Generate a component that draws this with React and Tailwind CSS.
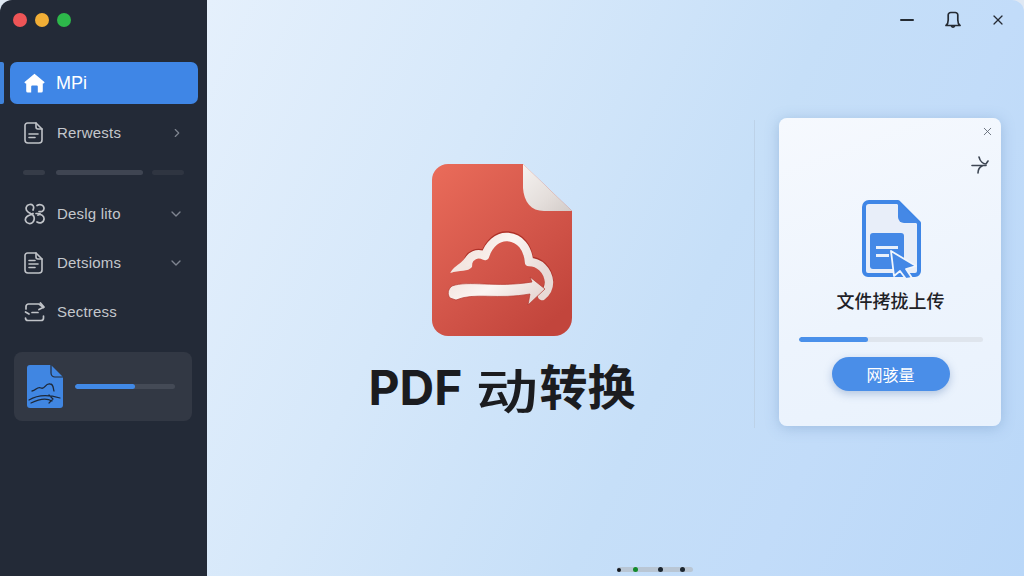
import React from "react";
import { ChevronDown, ChevronRight, X } from "lucide-react";

const sans = { fontFamily: '"Liberation Sans", "Noto Sans CJK SC", sans-serif' };

function HomeIcon() {
  return (
    <svg width="21" height="20" viewBox="0 0 21 20">
      <path d="M10.5 0.8 L20.4 9 Q21 10.4 19.2 10.4 L18.8 10.4 V18 a1.6 1.6 0 0 1 -1.6 1.6 H13.8 V13.5 a1 1 0 0 0 -1 -1 H8.2 a1 1 0 0 0 -1 1 V19.6 H3.8 a1.6 1.6 0 0 1 -1.6 -1.6 V10.4 L1.8 10.4 Q0 10.4 0.6 9 Z" fill="#fff" />
    </svg>
  );
}

function DocIcon({ lines }) {
  return (
    <svg width="19" height="22" viewBox="0 0 19 22" fill="none" stroke="#c0c3c8" strokeWidth="1.6" strokeLinecap="round" strokeLinejoin="round">
      <path d="M3.5 1 H12 L18 7 V18 a3 3 0 0 1 -3 3 H4 a3 3 0 0 1 -3 -3 V3.5 a2.5 2.5 0 0 1 2.5 -2.5 Z" />
      <path d="M12 1 V5 a2 2 0 0 0 2 2 H18" />
      {lines === 3 && <path d="M5 8.5 H11" />}
      <path d="M5 12 H14" />
      <path d="M5 15.5 H11" />
    </svg>
  );
}

function LinkIcon() {
  return (
    <svg width="21" height="22" viewBox="0 0 21 22" fill="none" stroke="#c0c3c8" strokeWidth="1.7" strokeLinecap="round">
      <path d="M9 7 C11 3 8 1 5.5 1.5 C2 2 1 6 3.5 8.5 C5.5 10.5 9 11 10 14 C11 18 8 21 5 20.5 C1.5 20 0 16 3 13.5 C5 12 7 12 9 10.5" />
      <path d="M13 2.5 C16 0.5 20 2 20 5.5 C20 8 17.5 9 15 8.5" />
      <path d="M14 12 C17 10.5 20.5 13 20 16.5 C19.5 19.5 16 21 13 19" />
      <path d="M12 10.5 L16 10.5" />
    </svg>
  );
}

function SyncIcon() {
  return (
    <svg width="21" height="20" viewBox="0 0 21 20" fill="none" stroke="#c0c3c8" strokeWidth="1.7" strokeLinecap="round" strokeLinejoin="round">
      <path d="M2 7 V4.5 a2.5 2.5 0 0 1 2.5 -2.5 H15 L19.5 5.5" />
      <path d="M16.5 1 L20 5 L15 7.5" />
      <path d="M1.5 16 a2.5 2.5 0 0 0 2.5 2.5 H17 a2.5 2.5 0 0 0 2.5 -2.5 V14" />
      <path d="M8 10.5 H14" />
      <path d="M1.5 10 L5 12" />
    </svg>
  );
}

function NavRow({ icon, label, chevron }) {
  return (
    <div className="h-[42px] mx-[10px] pl-[14px] pr-[13px] flex items-center text-[15px] tracking-[0.2px] text-[#c4c7cc]">
      <span className="w-[33px] flex items-center">{icon}</span>
      <span className="flex-1">{label}</span>
      {chevron === "right" && <ChevronRight size={14} color="#7f8590" strokeWidth={2} />}
      {chevron === "down" && <ChevronDown size={16} color="#7f8590" strokeWidth={2} />}
    </div>
  );
}

function MiniFile() {
  return (
    <svg width="36" height="43" viewBox="0 0 36 43" className="shrink-0">
      <path d="M3 0 H24 L36 12 V40 a3 3 0 0 1 -3 3 H3 a3 3 0 0 1 -3 -3 V3 a3 3 0 0 1 3 -3 Z" fill="#4086e2" />
      <path d="M24 0 V8 a4 4 0 0 0 4 4 H36" fill="none" stroke="#232a37" strokeWidth="1.2" />
      <path d="M5 26 C9 26 10 21 14 23 C18 25 18 18 23 19 C27 19 26 24 27 26" fill="none" stroke="#1d2838" strokeWidth="1.3" strokeLinecap="round" />
      <path d="M2 35 C10 30 20 29 33 33 M4 38 C12 34 20 33 25 36 M22 30 L26 34 L22 38" fill="none" stroke="#1d2838" strokeWidth="1.2" strokeLinecap="round" />
    </svg>
  );
}

function PdfLogo() {
  const cloud = "M36 98 C38 92 45 88 53 92 C57 80 66 72 76 73 C88 74 96 84 97 98 C107 98 116 106 117 118 C117 124 114 129 110 132";
  return (
    <svg width="140" height="172" viewBox="0 0 140 172" className="block">
      <defs>
        <linearGradient id="body" x1="0" y1="0" x2="0.75" y2="1">
          <stop offset="0" stopColor="#ea6c5a" />
          <stop offset="0.55" stopColor="#d4574b" />
          <stop offset="1" stopColor="#c2453c" />
        </linearGradient>
        <linearGradient id="fold" x1="0" y1="0" x2="1" y2="1">
          <stop offset="0" stopColor="#f5f2f0" />
          <stop offset="0.6" stopColor="#e4dedb" />
          <stop offset="1" stopColor="#d2cbc8" />
        </linearGradient>
        <linearGradient id="cl" x1="0" y1="0" x2="1" y2="0.4">
          <stop offset="0" stopColor="#f2e2dc" />
          <stop offset="0.5" stopColor="#fbf5f2" />
          <stop offset="1" stopColor="#e8dad6" />
        </linearGradient>
      </defs>
      <path d="M16 0 H91 L140 47 V154 a18 18 0 0 1 -18 18 H16 a16 16 0 0 1 -16 -16 V16 a16 16 0 0 1 16 -16 Z" fill="url(#body)" />
      <path d="M91 0 L140 47 H112 C99 47 92 38 91 24 Z" fill="url(#fold)" />
      <path d={cloud} fill="none" stroke="#ae3128" strokeWidth="9" strokeLinecap="round" strokeLinejoin="round" transform="translate(0 -1.2)" />
      <path d="M18 109 C24 100 28 101 33 94 L41 92 L40 103 C36 108 28 106 18 109 Z" fill="#f3e6e1" />
      <path d={cloud} fill="none" stroke="url(#cl)" strokeWidth="8.5" strokeLinecap="round" strokeLinejoin="round" />
      <path d="M20 122 C36 116 64 124 100 118 L98 113 L113 125 L96 141 L98 130 C66 136 42 128 24 136 L18 134 C15 130 16 125 20 122 Z" fill="url(#cl)" stroke="#b33a30" strokeWidth="0.7" />
    </svg>
  );
}

function UploadFile() {
  return (
    <svg width="60" height="80" viewBox="0 0 60 80" className="block">
      <path d="M7 2 H36 L57 23 V71 a4 4 0 0 1 -4 4 H6 a4 4 0 0 1 -4 -4 V7 a5 5 0 0 1 5 -5 Z" fill="#e8eef9" stroke="#3f86e6" strokeWidth="4" strokeLinejoin="round" />
      <path d="M36 2 L57 23 H42 a6 6 0 0 1 -6 -6 Z" fill="#4488e6" />
      <rect x="8" y="33" width="34" height="36" rx="3" fill="#4488e6" />
      <rect x="14" y="46" width="22" height="3" fill="#e9f0fb" />
      <rect x="14" y="54" width="13" height="3" fill="#e9f0fb" />
      <path d="M29 51 L54 66 L44 69 L50 78 L44 79 L38 71 L32 76 Z" fill="#4488e6" stroke="#f1f6fd" strokeWidth="1.8" strokeLinejoin="round" />
    </svg>
  );
}

function SplitIcon() {
  return (
    <svg width="18" height="18" viewBox="0 0 18 18" fill="none" stroke="#3d4653" strokeWidth="1.6" strokeLinecap="round">
      <path d="M1 9.5 H15" />
      <path d="M8 1 C9 5 12 8 15 8 L17 5" />
      <path d="M7 17 C7 13 9 11 11 10" />
    </svg>
  );
}

function BellIcon() {
  return (
    <svg width="16" height="18" viewBox="0 0 16 18" fill="none" stroke="#252b33" strokeWidth="1.7" strokeLinecap="round" strokeLinejoin="round">
      <path d="M1 14.5 C3 13 3.2 11 3.2 9 V4 a2.5 2.5 0 0 1 2.5 -2.5 H10.3 a2.5 2.5 0 0 1 2.5 2.5 V9 C12.8 11 13 13 15 14.5 Z" />
      <path d="M6.5 15 a1.6 1.6 0 0 0 3 0" />
    </svg>
  );
}

export default function App() {
  return (
    <div className="w-[1024px] h-[576px] bg-[#dfe8f3] overflow-hidden" style={sans}>
      <div className="w-full h-full flex rounded-t-[12px] overflow-hidden">
        <aside className="w-[207px] h-full shrink-0 bg-[#232a37] flex flex-col">
          <div className="h-[62px] pl-[13px] pt-[13px] flex items-start gap-[8px]">
            <span className="w-[14px] h-[14px] rounded-full bg-[#ee5557]" />
            <span className="w-[14px] h-[14px] rounded-full bg-[#f1ae36]" />
            <span className="w-[14px] h-[14px] rounded-full bg-[#2db84a]" />
          </div>

          <div className="h-[42px] flex">
            <span className="w-[4px] h-full bg-[#3f83dc] rounded-r-[2px]" />
            <div className="ml-[6px] w-[188px] h-full rounded-[7px] bg-[#3f86e6] pl-[14px] flex items-center text-white text-[18px]">
              <span className="w-[32px] flex items-center"><HomeIcon /></span>
              MPi
            </div>
          </div>

          <div className="mt-[8px]">
            <NavRow icon={<DocIcon lines={2} />} label="Rerwests" chevron="right" />
          </div>

          <div className="mt-[16px] ml-[23px] flex items-center h-[5px]">
            <span className="w-[22px] h-full rounded-full bg-[#363c48]" />
            <span className="ml-[11px] w-[87px] h-full rounded-full bg-[#3f4552]" />
            <span className="ml-[9px] w-[32px] h-full rounded-full bg-[#2f3541]" />
          </div>

          <div className="mt-[18px] flex flex-col gap-[7px]">
            <NavRow icon={<LinkIcon />} label="Deslg lito" chevron="down" />
            <NavRow icon={<DocIcon lines={3} />} label="Detsioms" chevron="down" />
            <NavRow icon={<SyncIcon />} label="Sectress" />
          </div>

          <div className="mt-[19px] ml-[14px] w-[178px] h-[69px] rounded-[8px] bg-[#323844] pl-[13px] pr-[17px] flex items-center gap-[12px]">
            <MiniFile />
            <div className="flex-1 h-[5px] rounded-full bg-[#444a56] overflow-hidden">
              <div className="w-[60%] h-full bg-[#4189e6] rounded-full" />
            </div>
          </div>
        </aside>

        <main className="flex-1 h-full flex flex-col bg-[linear-gradient(115deg,#e5f0fc_0%,#d6e8fa_30%,#c6dff8_58%,#c2dcf9_75%,#b9d7f8_100%)]">
          <div className="h-[40px] shrink-0 flex items-center justify-end pr-[18px] text-[#252b33]">
            <span className="w-[14px] h-[2px] bg-[#252b33] rounded-full" />
            <span className="ml-[31px]"><BellIcon /></span>
            <span className="ml-[29px]"><X size={16} strokeWidth={1.8} /></span>
          </div>

          <div className="flex-1 flex items-start">
            <div className="w-[547px] pl-[43px] pt-[124px] flex flex-col items-center">
              <PdfLogo />
              <h1 className="mt-[23px] h-[58px] flex items-center justify-center whitespace-nowrap text-[#1b1c1f] font-bold text-[48px] leading-none" style={{ fontFamily: '"Inter", "Noto Sans CJK SC", sans-serif' }}>
                <span>PDF</span>
                <span className="inline-block ml-[13px] w-[64px] text-center scale-x-[1.3] font-medium" style={{ fontFamily: '"Noto Sans CJK SC", sans-serif' }}>动</span>
                <span>转换</span>
              </h1>
            </div>

            <div className="w-px h-[308px] mt-[80px] bg-[#bdd2e8]" />

            <div className="ml-[24px] mt-[78px] w-[222px] h-[308px] rounded-[8px] bg-[linear-gradient(160deg,#f6f9fe_0%,#edf4fd_60%,#e9f2fd_100%)] shadow-[0_2px_14px_rgba(90,130,180,0.35)] flex flex-col items-center">
              <div className="w-full h-[20px] flex justify-end items-end pr-[7px] text-[#5b6470]">
                <X size={13} strokeWidth={1.6} />
              </div>
              <div className="w-full h-[18px] mt-[18px] flex justify-end pr-[12px]">
                <SplitIcon />
              </div>
              <div className="mt-[26px] ml-[3px]"><UploadFile /></div>
              <div className="mt-[8px] text-[18px] font-medium text-[#1f2227] leading-[24px] ml-[1px]" style={{ fontFamily: '"Noto Sans CJK SC", sans-serif' }}>文件拷拢上传</div>
              <div className="mt-[25px] ml-[1px] w-[184px] h-[5px] rounded-full bg-[#dfe5ed] overflow-hidden">
                <div className="w-[69px] h-full rounded-full bg-[#4a90ea]" />
              </div>
              <button className="mt-[15px] ml-[1px] w-[118px] h-[34px] rounded-full bg-[#4a8ee8] text-white text-[16px] shadow-[0_3px_8px_rgba(70,110,170,0.35)]" style={{ fontFamily: '"Noto Sans CJK SC", sans-serif' }}>网骇量</button>
            </div>
          </div>

          <div className="h-[14px] shrink-0 flex justify-end pr-[331px] pt-[5px]">
            <div className="w-[76px] h-[5px] rounded-full bg-[#b9c6d4] flex items-center">
              <span className="w-[4px] h-[4px] rounded-full bg-[#14181e]" />
              <span className="ml-[12px] w-[5px] h-[5px] rounded-full bg-[#128a2c]" />
              <span className="ml-[20px] w-[5px] h-[5px] rounded-full bg-[#1c2630]" />
              <span className="ml-[17px] w-[5px] h-[5px] rounded-full bg-[#1c2630]" />
            </div>
          </div>
        </main>
      </div>
    </div>
  );
}
